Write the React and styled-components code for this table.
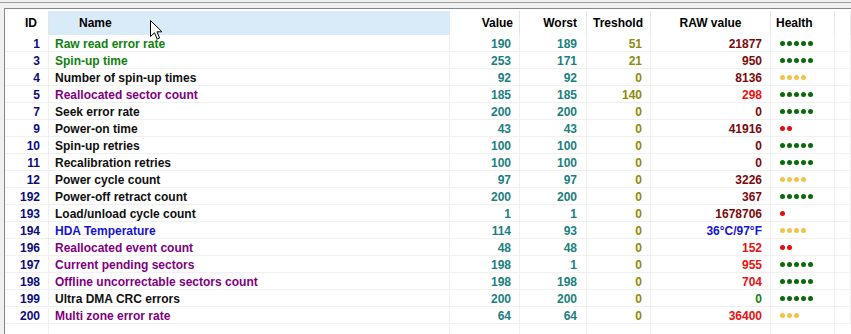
import React from 'react'
import styled, { createGlobalStyle } from 'styled-components'

const GlobalStyle = createGlobalStyle`
  html, body {
    margin: 0;
    padding: 0;
    background: #f0f0f0;
  }
  body {
    font-family: "Liberation Sans", Arial, sans-serif;
    font-size: 12px;
    font-weight: 700;
  }
`

const columns = [
  { key: 'id', title: 'ID', width: 44, align: 'right', head: '0 11px 0 0', body: '0 8px 0 0' },
  { key: 'name', title: 'Name', width: 401, align: 'left', head: '0 0 0 30px', body: '0 0 0 6px' },
  { key: 'value', title: 'Value', width: 70, align: 'right', head: '0 6px 0 0', body: '0 8px 0 0' },
  { key: 'worst', title: 'Worst', width: 67, align: 'right', head: '0 9px 0 0', body: '0 9px 0 0' },
  { key: 'threshold', title: 'Treshold', width: 64, align: 'right', head: '0 7px 0 0', body: '0 8px 0 0' },
  { key: 'raw', title: 'RAW value', width: 120, align: 'right', headAlign: 'center', head: '0', body: '0 8px 0 0' },
  { key: 'health', title: 'Health', width: 64, align: 'left', head: '0 0 0 5px', body: '0 0 0 9px' },
]

const gridCols = columns.map(c => c.width + 'px').join(' ') + ' 1fr'

const C = {
  navy: '#0c0c7a',
  green: '#108010',
  black: '#101010',
  purple: '#800080',
  blue: '#1414d2',
  teal: '#1a8080',
  olive: '#8c8c0a',
  maroon: '#7a0a0a',
  red: '#e81010',
}

const DOT = { g: '#0a690a', y: '#f4c246', r: '#e40c0c' }

const rows = [
  { id: 1, name: 'Raw read error rate', nc: C.green, value: 190, worst: 189, thr: 51, raw: '21877', rc: C.maroon, health: 'g5' },
  { id: 3, name: 'Spin-up time', nc: C.green, value: 253, worst: 171, thr: 21, raw: '950', rc: C.maroon, health: 'g5' },
  { id: 4, name: 'Number of spin-up times', nc: C.black, value: 92, worst: 92, thr: 0, raw: '8136', rc: C.maroon, health: 'y4' },
  { id: 5, name: 'Reallocated sector count', nc: C.purple, value: 185, worst: 185, thr: 140, raw: '298', rc: C.red, health: 'g5' },
  { id: 7, name: 'Seek error rate', nc: C.black, value: 200, worst: 200, thr: 0, raw: '0', rc: C.maroon, health: 'g5' },
  { id: 9, name: 'Power-on time', nc: C.black, value: 43, worst: 43, thr: 0, raw: '41916', rc: C.maroon, health: 'r2' },
  { id: 10, name: 'Spin-up retries', nc: C.black, value: 100, worst: 100, thr: 0, raw: '0', rc: C.maroon, health: 'g5' },
  { id: 11, name: 'Recalibration retries', nc: C.black, value: 100, worst: 100, thr: 0, raw: '0', rc: C.maroon, health: 'g5' },
  { id: 12, name: 'Power cycle count', nc: C.black, value: 97, worst: 97, thr: 0, raw: '3226', rc: C.maroon, health: 'y4' },
  { id: 192, name: 'Power-off retract count', nc: C.black, value: 200, worst: 200, thr: 0, raw: '367', rc: C.maroon, health: 'g5' },
  { id: 193, name: 'Load/unload cycle count', nc: C.black, value: 1, worst: 1, thr: 0, raw: '1678706', rc: C.maroon, health: 'r1' },
  { id: 194, name: 'HDA Temperature', nc: C.blue, value: 114, worst: 93, thr: 0, raw: '36°C/97°F', rc: C.blue, health: 'y4' },
  { id: 196, name: 'Reallocated event count', nc: C.purple, value: 48, worst: 48, thr: 0, raw: '152', rc: C.red, health: 'r2' },
  { id: 197, name: 'Current pending sectors', nc: C.purple, value: 198, worst: 1, thr: 0, raw: '955', rc: C.red, health: 'g5' },
  { id: 198, name: 'Offline uncorrectable sectors count', nc: C.purple, value: 198, worst: 198, thr: 0, raw: '704', rc: C.red, health: 'g5' },
  { id: 199, name: 'Ultra DMA CRC errors', nc: C.black, value: 200, worst: 200, thr: 0, raw: '0', rc: C.green, health: 'g5' },
  { id: 200, name: 'Multi zone error rate', nc: C.purple, value: 64, worst: 64, thr: 0, raw: '36400', rc: C.red, health: 'y3' },
]

const Window = styled.div`
  position: relative;
  height: 334px;
  display: flex;
  flex-direction: column;
  overflow: hidden;
  background: #f0f0f0;
`

const TopEdge = styled.div`
  height: 2px;
  border-bottom: 1px solid #a0a0a0;
  flex: none;
`

const ListView = styled.div`
  flex: 1;
  margin: 5px 0 0 4px;
  border-left: 1px solid #828790;
  border-top: 1px solid #828790;
  background: #fff;
  padding-top: 2px;
  display: flex;
  flex-direction: column;
`

const HeaderRow = styled.div`
  display: grid;
  grid-template-columns: ${gridCols};
  height: 24px;
  flex: none;
`

const HeaderCell = styled.div`
  display: flex;
  align-items: center;
  justify-content: ${p => (p.$align === 'right' ? 'flex-end' : p.$align === 'center' ? 'center' : 'flex-start')};
  padding: ${p => p.$pad};
  border-right: 1px solid ${p => (p.$hover ? '#d9ebf9' : '#e5e5e5')};
  background: ${p => (p.$hover ? '#d9ebf9' : '#fff')};
  color: #000;
  white-space: nowrap;
`

const Row = styled.div`
  display: grid;
  grid-template-columns: ${gridCols};
  height: 17px;
  flex: none;
`

const Cell = styled.div`
  display: flex;
  align-items: center;
  justify-content: ${p => (p.$align === 'right' ? 'flex-end' : 'flex-start')};
  padding: ${p => p.$pad};
  padding-top: 1px;
  color: ${p => p.$color || '#000'};
  border-right: 1px solid #f0f0f0;
  border-bottom: 1px solid #f0f0f0;
  white-space: nowrap;
  overflow: hidden;
`

const Filler = styled.div`
  flex: 1;
  display: grid;
  grid-template-columns: ${gridCols};
`

const FillerCell = styled.div`
  border-right: 1px solid #f0f0f0;
`

const Dots = styled.div`
  display: flex;
  gap: 2px;
`

const Dot = styled.span`
  width: 5px;
  height: 5px;
  border-radius: 50%;
  background: ${p => p.$color};
`

const Pointer = styled.svg`
  position: absolute;
  left: 150px;
  top: 20px;
  pointer-events: none;
`

function Health({ code }) {
  const color = DOT[code[0]]
  const n = Number(code.slice(1))
  return (
    <Dots>
      {Array.from({ length: n }, (_, i) => <Dot key={i} $color={color} />)}
    </Dots>
  )
}

function renderCell(col, r) {
  switch (col.key) {
    case 'id': return { text: r.id, color: C.navy }
    case 'name': return { text: r.name, color: r.nc }
    case 'value': return { text: r.value, color: C.teal }
    case 'worst': return { text: r.worst, color: C.teal }
    case 'threshold': return { text: r.thr, color: C.olive }
    case 'raw': return { text: r.raw, color: r.rc }
    default: return { text: <Health code={r.health} /> }
  }
}

export default function App() {
  return (
    <Window>
      <GlobalStyle />
      <TopEdge />
      <ListView>
        <HeaderRow>
          {columns.map(c => (
            <HeaderCell key={c.key} $align={c.headAlign || c.align} $pad={c.head} $hover={c.key === 'name'}>
              {c.title}
            </HeaderCell>
          ))}
          <HeaderCell $pad="0" />
        </HeaderRow>
        {rows.map(r => (
          <Row key={r.id}>
            {columns.map(c => {
              const v = renderCell(c, r)
              return (
                <Cell key={c.key} $align={c.align} $pad={c.body} $color={v.color}>
                  {v.text}
                </Cell>
              )
            })}
            <Cell $pad="0" />
          </Row>
        ))}
        <Filler>
          {columns.map(c => <FillerCell key={c.key} />)}
        </Filler>
      </ListView>
      <Pointer width="13" height="20" viewBox="0 0 13 20">
        <path d="M0.5 0.5 L0.5 16.5 L4.5 12.8 L7.2 19 L9.6 18 L7 11.8 L12 11.8 Z" fill="#fff" stroke="#000" strokeWidth="1" strokeLinejoin="miter" />
      </Pointer>
    </Window>
  )
}
